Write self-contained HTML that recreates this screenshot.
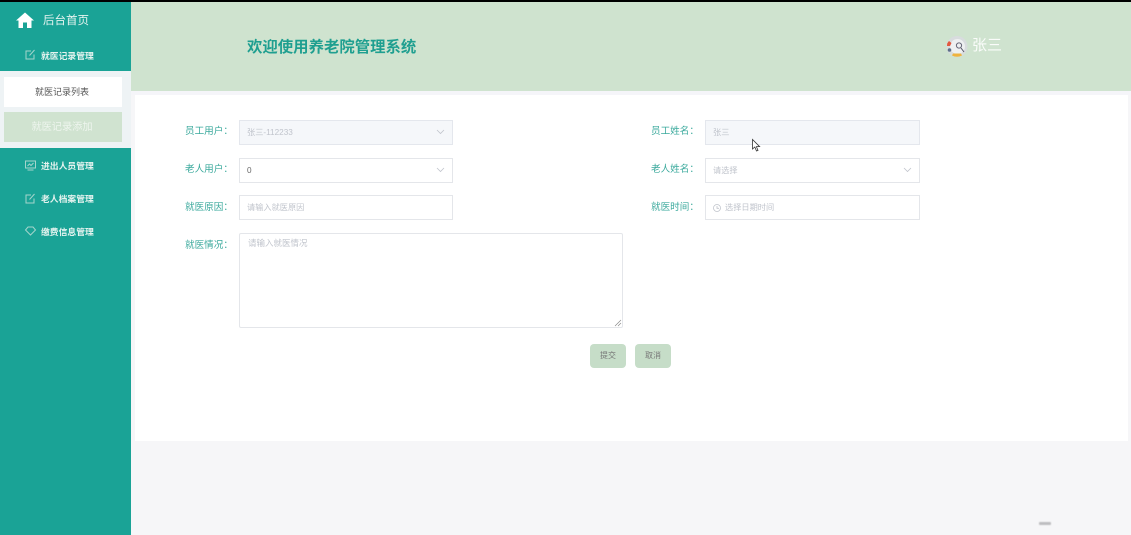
<!DOCTYPE html>
<html lang="zh"><head><meta charset="utf-8"><style>
html,body{margin:0;padding:0;width:1131px;height:535px;overflow:hidden;background:#f6f6f8}
body{position:relative;font-family:"Liberation Sans","Noto Sans CJK SC",sans-serif}
#w{left:0;top:0;width:1131px;height:535px;filter:blur(.35px)}
div,span{position:absolute;box-sizing:border-box;white-space:nowrap}
svg{position:absolute;overflow:visible}
.top{left:0;top:0;width:1131px;height:2px;background:#000}
.side{left:0;top:2px;width:131px;height:533px;background:#1aa396}
.sub{left:0;top:71px;width:131px;height:77px;background:#eef3f5}
.m{left:41px;font-size:8.8px;font-weight:700;color:#e4f3ef;line-height:12px}
.lab{font-size:9.6px;color:#3aa99c;line-height:14px}
.box{background:#fff;border:1px solid #e4e6ea;height:25px;font-size:8.2px;line-height:23px;color:#c0c4cc;padding-left:7px}
.dis{background:#f5f7fa;border-color:#e4e7ed}
.arrow{width:7px;height:7px;top:7px;right:8px}
.btn{width:36px;height:24px;top:344px;background:#c6ddc8;border-radius:4px;font-size:8px;line-height:24px;text-align:center;color:#777}
</style></head><body><div id="w">
<div class="top"></div>
<div class="side"></div>
<svg style="left:16px;top:12px" width="18" height="16" viewBox="0 0 18 16"><path d="M9 0.5 L18 8.5 L15.5 8.5 L15.5 16 L11 16 L11 10.5 L7 10.5 L7 16 L2.5 16 L2.5 8.5 L0 8.5 Z" fill="#fff"/></svg>
<div style="left:43px;top:14px;font-size:11.5px;line-height:15px;color:#e6f4f0">后台首页</div>
<svg style="left:25px;top:49px" width="11" height="11" viewBox="0 0 11 11" fill="none" stroke="#a5d5cc" stroke-width="1"><path d="M9 5.5V10H1V2H6M4.5 6.5L9.5 1"/></svg>
<div class="m" style="top:50px">就医记录管理</div>
<div class="sub"></div>
<div style="left:4px;top:77px;width:118px;height:30px;background:#fff;font-size:9px;line-height:31px;text-align:center;padding-right:2px;color:#555">就医记录列表</div>
<div style="left:4px;top:112px;width:118px;height:30px;background:#d0e3d0;font-size:10.2px;line-height:32px;text-align:center;padding-right:2px;color:#eef5ee">就医记录添加</div>
<svg style="left:25px;top:160px" width="11" height="11" viewBox="0 0 11 11" fill="none" stroke="#a5d5cc" stroke-width="1"><path d="M.5 1H10.5V8H.5ZM2.5 10H8.5M2.5 6L4.5 4L6 5.5L8.5 3"/></svg>
<div class="m" style="top:159.5px">进出人员管理</div>
<svg style="left:25px;top:193px" width="11" height="11" viewBox="0 0 11 11" fill="none" stroke="#a5d5cc" stroke-width="1"><path d="M9 5.5V10H1V2H6M4.5 6.5L9.5 1"/></svg>
<div class="m" style="top:192.5px">老人档案管理</div>
<svg style="left:25px;top:226px" width="11" height="10" viewBox="0 0 11 10" fill="none" stroke="#a5d5cc" stroke-width="1"><path d="M3 1H8L10.5 4L5.5 9L.5 4Z"/></svg>
<div class="m" style="top:225.5px">缴费信息管理</div>

<div style="left:131px;top:2px;width:1000px;height:89px;background:#cfe3cf"></div>
<div style="left:131px;top:91px;width:1000px;height:4px;background:#f5f5f9"></div>
<div style="left:247px;top:37px;font-size:15.4px;font-weight:700;line-height:21px;color:#1f9f90">欢迎使用养老院管理系统</div>
<svg style="left:946px;top:35px" width="22" height="23" viewBox="0 0 22 23"><circle cx="11" cy="11.5" r="10.5" fill="#d8dcde"/><circle cx="11.5" cy="11.5" r="7.5" fill="#eef0f1"/><path d="M1.2 8.5A10.5 10.5 0 0 1 3 6L5.5 8L4 11H1Z" fill="#e2583e"/><path d="M6 20.5Q11 23 16 20.5L15 18.5H7Z" fill="#eeb33e"/><circle cx="3.5" cy="15" r="1.8" fill="#5d6f8a"/><circle cx="13" cy="10.5" r="2.6" fill="none" stroke="#667" stroke-width="1"/><path d="M15 13L18 17" stroke="#556" stroke-width="1"/></svg>
<div style="left:972px;top:37px;font-size:15px;line-height:18px;color:#fafcfa">张三</div>

<div style="left:135px;top:95px;width:993px;height:346px;background:#fff"></div>

<div class="lab" style="left:185px;top:125px">员工用户：</div>
<div class="box dis" style="left:239px;top:120px;width:214px;height:24.5px">张三-112233<svg class="arrow" viewBox="0 0 7 7" fill="none" stroke="#c0c4cc" stroke-width=".8"><path d="M0 2L3.5 5.5L7 2"/></svg></div>
<div class="lab" style="left:185px;top:163px">老人用户：</div>
<div class="box" style="left:239px;top:158px;width:214px;height:24.5px;color:#666">0<svg class="arrow" viewBox="0 0 7 7" fill="none" stroke="#c0c4cc" stroke-width=".8"><path d="M0 2L3.5 5.5L7 2"/></svg></div>
<div class="lab" style="left:185px;top:201px">就医原因：</div>
<div class="box" style="left:239px;top:195px;width:214px">请输入就医原因</div>
<div class="lab" style="left:185px;top:239px">就医情况：</div>
<div class="box" style="left:239px;top:233px;width:384px;height:95px;border-radius:2px;padding-left:8px;line-height:18px;font-size:8.5px">请输入就医情况<svg style="right:1px;bottom:1px" width="6" height="6" viewBox="0 0 6 6" stroke="#888" stroke-width=".7"><path d="M0 6L6 0M3 6L6 3"/></svg></div>

<div class="lab" style="left:651px;top:125px">员工姓名：</div>
<div class="box dis" style="left:705px;top:120px;width:215px;height:24.5px">张三</div>
<div class="lab" style="left:651px;top:163px">老人姓名：</div>
<div class="box" style="left:705px;top:158px;width:215px;height:24.5px">请选择<svg class="arrow" viewBox="0 0 7 7" fill="none" stroke="#c0c4cc" stroke-width=".8"><path d="M0 2L3.5 5.5L7 2"/></svg></div>
<div class="lab" style="left:651px;top:201px">就医时间：</div>
<div class="box" style="left:705px;top:195px;width:215px;padding-left:19px">选择日期时间<svg style="left:7px;top:8px" width="8" height="8" viewBox="0 0 8 8" fill="none" stroke="#c0c4cc" stroke-width=".8"><circle cx="4" cy="4" r="3.5"/><path d="M4 2V4.3H6"/></svg></div>

<svg style="left:752px;top:139px" width="9" height="13" viewBox="0 0 9 13"><path d="M.5 .5V10L2.8 8L4.5 12L6 11.4L4.4 7.6H7.6Z" fill="#fff" stroke="#333" stroke-width=".8"/></svg>

<div class="btn" style="left:590px">提交</div>
<div class="btn" style="left:635px">取消</div>

<div style="left:1039px;top:522px;width:12px;height:3px;background:#bdbdc0;border-radius:1px;filter:blur(.5px)"></div>
</div></body></html>
